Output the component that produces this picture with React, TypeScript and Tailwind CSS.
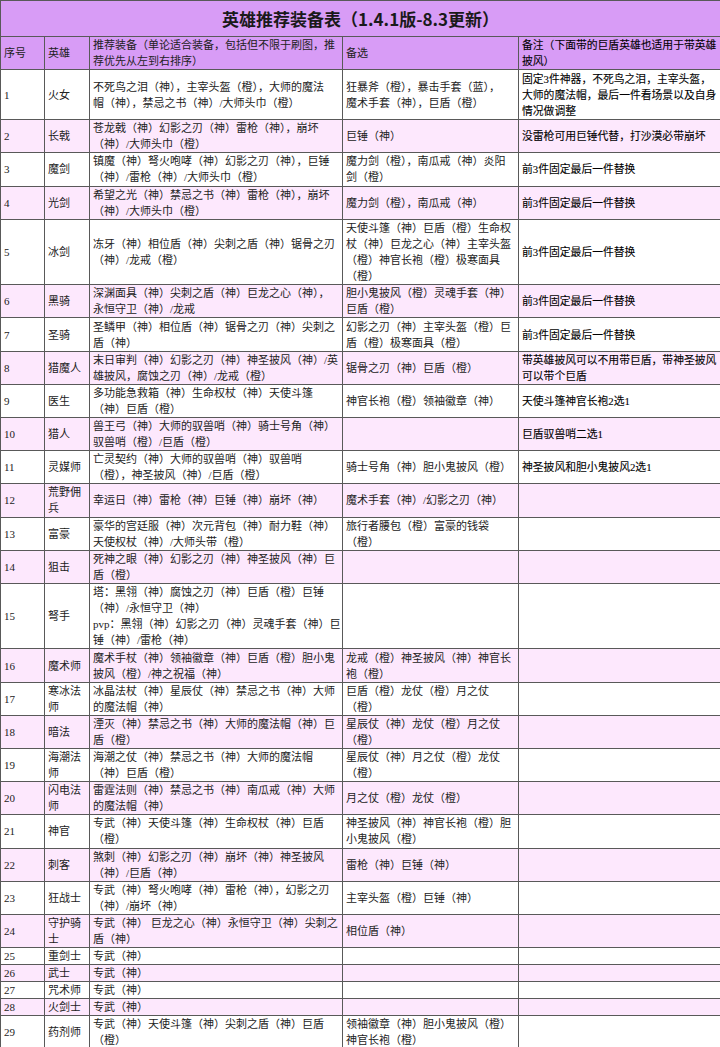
type Row = {
  no: string;
  hero: string[];
  rec: string[];
  alt: string[];
  note: string[];
};

const rows: Row[] = [
  {
    no: "1",
    hero: ["火女"],
    rec: ["不死鸟之泪（神），主宰头盔（橙），大师的魔法", "帽（神），禁忌之书（神）/大师头巾（橙）"],
    alt: ["狂暴斧（橙），暴击手套（蓝），", "魔术手套（神），巨盾（橙）"],
    note: ["固定3件神器，不死鸟之泪，主宰头盔，", "大师的魔法帽，最后一件看场景以及自身", "情况做调整"],
  },
  {
    no: "2",
    hero: ["长戟"],
    rec: ["苍龙戟（神）幻影之刃（神）雷枪（神），崩坏", "（神）/大师头巾（橙）"],
    alt: ["巨锤（神）"],
    note: ["没雷枪可用巨锤代替，打沙漠必带崩坏"],
  },
  {
    no: "3",
    hero: ["魔剑"],
    rec: ["镇魔（神）弩火咆哮（神）幻影之刃（神），巨锤", "（神）/雷枪（神）/大师头巾（橙）"],
    alt: ["魔力剑（橙），南瓜戒（神）炎阳", "剑（橙）"],
    note: ["前3件固定最后一件替换"],
  },
  {
    no: "4",
    hero: ["光剑"],
    rec: ["希望之光（神）禁忌之书（神）雷枪（神），崩坏", "（神）/大师头巾（橙）"],
    alt: ["魔力剑（橙），南瓜戒（神）"],
    note: ["前3件固定最后一件替换"],
  },
  {
    no: "5",
    hero: ["冰剑"],
    rec: ["冻牙（神）相位盾（神）尖刺之盾（神）锯骨之刃", "（神）/龙戒（橙）"],
    alt: ["天使斗篷（神）巨盾（橙）生命权", "杖（神）巨龙之心（神）主宰头盔", "（橙）神官长袍（橙）极寒面具", "（橙）"],
    note: ["前3件固定最后一件替换"],
  },
  {
    no: "6",
    hero: ["黑骑"],
    rec: ["深渊面具（神）尖刺之盾（神）巨龙之心（神），", "永恒守卫（神）/龙戒"],
    alt: ["胆小鬼披风（橙）灵魂手套（神）", "巨盾（橙）"],
    note: ["前3件固定最后一件替换"],
  },
  {
    no: "7",
    hero: ["圣骑"],
    rec: ["圣鳞甲（神）相位盾（神）锯骨之刃（神）尖刺之", "盾（神）"],
    alt: ["幻影之刃（神）主宰头盔（橙）巨", "盾（橙）极寒面具（橙）"],
    note: ["前3件固定最后一件替换"],
  },
  {
    no: "8",
    hero: ["猎魔人"],
    rec: ["末日审判（神）幻影之刃（神）神圣披风（神）/英", "雄披风，腐蚀之刃（神）/龙戒（橙）"],
    alt: ["锯骨之刃（神）巨盾（橙）"],
    note: ["带英雄披风可以不用带巨盾，带神圣披风", "可以带个巨盾"],
  },
  {
    no: "9",
    hero: ["医生"],
    rec: ["多功能急救箱（神）生命权杖（神）天使斗篷", "（神）巨盾（橙）"],
    alt: ["神官长袍（橙）领袖徽章（神）"],
    note: ["天使斗篷神官长袍2选1"],
  },
  {
    no: "10",
    hero: ["猎人"],
    rec: ["兽王弓（神）大师的驭兽哨（神）骑士号角（神）", "驭兽哨（橙）/巨盾（橙）"],
    alt: [],
    note: ["巨盾驭兽哨二选1"],
  },
  {
    no: "11",
    hero: ["灵媒师"],
    rec: ["亡灵契约（神）大师的驭兽哨（神）驭兽哨", "（橙），神圣披风（神）/巨盾（橙）"],
    alt: ["骑士号角（神）胆小鬼披风（橙）"],
    note: ["神圣披风和胆小鬼披风2选1"],
  },
  {
    no: "12",
    hero: ["荒野佣", "兵"],
    rec: ["幸运日（神）雷枪（神）巨锤（神）崩坏（神）"],
    alt: ["魔术手套（神）/幻影之刃（神）"],
    note: [],
  },
  {
    no: "13",
    hero: ["富豪"],
    rec: ["豪华的宫廷服（神）次元背包（神）耐力鞋（神）", "天使权杖（神）/大师头带（橙）"],
    alt: ["旅行者腰包（橙）富豪的钱袋", "（橙）"],
    note: [],
  },
  {
    no: "14",
    hero: ["狙击"],
    rec: ["死神之眼（神）幻影之刃（神）神圣披风（神）巨", "盾（橙）"],
    alt: [],
    note: [],
  },
  {
    no: "15",
    hero: ["弩手"],
    rec: [
      "塔：黑翎（神）腐蚀之刃（神）巨盾（橙）巨锤",
      "（神）/永恒守卫（神）",
      "pvp：黑翎（神）幻影之刃（神）灵魂手套（神）巨",
      "锤（神）/雷枪（神）",
    ],
    alt: [],
    note: [],
  },
  {
    no: "16",
    hero: ["魔术师"],
    rec: ["魔术手杖（神）领袖徽章（神）巨盾（橙）胆小鬼", "披风（橙）/神之祝福（神）"],
    alt: ["龙戒（橙）神圣披风（神）神官长", "袍（橙）"],
    note: [],
  },
  {
    no: "17",
    hero: ["寒冰法", "师"],
    rec: ["冰晶法杖（神）星辰仗（神）禁忌之书（神）大师", "的魔法帽（神）"],
    alt: ["巨盾（橙）龙仗（橙）月之仗", "（橙）"],
    note: [],
  },
  {
    no: "18",
    hero: ["暗法"],
    rec: ["湮灭（神）禁忌之书（神）大师的魔法帽（神）巨", "盾（橙）"],
    alt: ["星辰仗（神）龙仗（橙）月之仗", "（橙）"],
    note: [],
  },
  {
    no: "19",
    hero: ["海潮法", "师"],
    rec: ["海潮之仗（神）禁忌之书（神）大师的魔法帽", "（神）巨盾（橙）"],
    alt: ["星辰仗（神）月之仗（橙）龙仗", "（橙）"],
    note: [],
  },
  {
    no: "20",
    hero: ["闪电法", "师"],
    rec: ["雷霆法则（神）禁忌之书（神）南瓜戒（神）大师", "的魔法帽（神）"],
    alt: ["月之仗（橙）龙仗（橙）"],
    note: [],
  },
  {
    no: "21",
    hero: ["神官"],
    rec: ["专武（神）天使斗篷（神）生命权杖（神）巨盾", "（橙）"],
    alt: ["神圣披风（神）神官长袍（橙）胆", "小鬼披风（橙）"],
    note: [],
  },
  {
    no: "22",
    hero: ["刺客"],
    rec: ["煞刺（神）幻影之刃（神）崩坏（神）神圣披风", "（神）/巨盾（神）"],
    alt: ["雷枪（神）巨锤（神）"],
    note: [],
  },
  {
    no: "23",
    hero: ["狂战士"],
    rec: ["专武（神）弩火咆哮（神）雷枪（神），幻影之刃", "（神）/崩坏（神）"],
    alt: ["主宰头盔（橙）巨锤（神）"],
    note: [],
  },
  {
    no: "24",
    hero: ["守护骑", "士"],
    rec: ["专武（神） 巨龙之心（神）永恒守卫（神）尖刺之", "盾（神）"],
    alt: ["相位盾（神）"],
    note: [],
  },
  { no: "25", hero: ["重剑士"], rec: ["专武（神）"], alt: [], note: [] },
  { no: "26", hero: ["武士"], rec: ["专武（神）"], alt: [], note: [] },
  { no: "27", hero: ["咒术师"], rec: ["专武（神）"], alt: [], note: [] },
  { no: "28", hero: ["火剑士"], rec: ["专武（神）"], alt: [], note: [] },
  {
    no: "29",
    hero: ["药剂师"],
    rec: ["专武（神）天使斗篷（神）尖刺之盾（神）巨盾", "（橙）"],
    alt: ["领袖徽章（神）胆小鬼披风（橙）", "神官长袍（橙）"],
    note: [],
  },
];

const rowHeight: Record<number, string> = {
  1: "h-[16.6px]",
  2: "h-[33.2px]",
  3: "h-[50px]",
  4: "h-[65.5px]",
};

function Lines({ lines }: { lines: string[] }) {
  return (
    <>
      {lines.map((l, i) => (
        <span key={i} className="block whitespace-nowrap">
          {l}
        </span>
      ))}
    </>
  );
}

const cell = "border border-[#595959] px-[3px] py-0 align-middle text-left";
// 备注 column is a bit darker in the sheet
const noteCell = `${cell} text-[10.8px] text-black [-webkit-text-stroke:0.1px_#000]`;

export default function App() {
  return (
    <div className="w-[720px] bg-white font-['Liberation_Serif','Noto_Sans_CJK_SC',serif] text-[11px] leading-[16px] text-[#222]">
      <table className="w-[720px] table-fixed border-collapse">
        <colgroup>
          <col className="w-[44px]" />
          <col className="w-[45px]" />
          <col className="w-[253px]" />
          <col className="w-[176px]" />
          <col className="w-[202px]" />
        </colgroup>
        <tbody>
          <tr className="h-[36px] bg-[#d89cf6]">
            <td
              colSpan={5}
              className="border border-[#595959] text-center align-middle font-['Noto_Sans_CJK_SC',sans-serif] text-[17px] font-bold leading-[20px] text-[#1a1a1a]"
            >
              英雄推荐装备表（1.4.1版-8.3更新）
            </td>
          </tr>
          <tr className="h-[33.2px] bg-[#d89cf6]">
            <td className={cell}>序号</td>
            <td className={cell}>英雄</td>
            <td className={cell}>
              <Lines lines={["推荐装备（单论适合装备，包括但不限于刷图，推", "荐优先从左到右排序）"]} />
            </td>
            <td className={cell}>备选</td>
            <td className={noteCell}>
              <Lines lines={["备注（下面带的巨盾英雄也适用于带英雄", "披风）"]} />
            </td>
          </tr>
          {rows.map((r, i) => {
            const n = Math.max(r.hero.length, r.rec.length, r.alt.length, r.note.length, 1);
            return (
              <tr key={r.no} className={`${rowHeight[n]} ${i % 2 === 1 ? "bg-[#fde8fd]" : "bg-white"}`}>
                <td className={cell}>{r.no}</td>
                <td className={cell}>
                  <Lines lines={r.hero} />
                </td>
                <td className={cell}>
                  <Lines lines={r.rec} />
                </td>
                <td className={cell}>
                  <Lines lines={r.alt} />
                </td>
                <td className={noteCell}>
                  <Lines lines={r.note} />
                </td>
              </tr>
            );
          })}
        </tbody>
      </table>
    </div>
  );
}
